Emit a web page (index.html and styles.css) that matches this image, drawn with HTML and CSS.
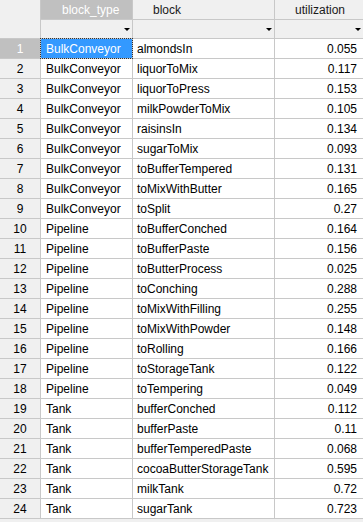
FILE: index.html
```html
<!DOCTYPE html>
<html>
<head>
<meta charset="utf-8">
<link rel="stylesheet" href="styles.css">
</head>
<body>
<div class="grid">
  <div class="corner"></div>
  <div class="hdr hdr-sel">block_type</div>
  <div class="hdr">block</div>
  <div class="hdr">utilization</div>
  <div class="flt"><span class="arrow"></span></div>
  <div class="flt"><span class="arrow"></span></div>
  <div class="flt"><span class="arrow"></span></div>

  <div class="rn rn-sel">1</div><div class="c t c-sel">BulkConveyor</div><div class="c">almondsIn</div><div class="c num">0.055</div>
  <div class="rn">2</div><div class="c t">BulkConveyor</div><div class="c">liquorToMix</div><div class="c num">0.117</div>
  <div class="rn">3</div><div class="c t">BulkConveyor</div><div class="c">liquorToPress</div><div class="c num">0.153</div>
  <div class="rn">4</div><div class="c t">BulkConveyor</div><div class="c">milkPowderToMix</div><div class="c num">0.105</div>
  <div class="rn">5</div><div class="c t">BulkConveyor</div><div class="c">raisinsIn</div><div class="c num">0.134</div>
  <div class="rn">6</div><div class="c t">BulkConveyor</div><div class="c">sugarToMix</div><div class="c num">0.093</div>
  <div class="rn">7</div><div class="c t">BulkConveyor</div><div class="c">toBufferTempered</div><div class="c num">0.131</div>
  <div class="rn">8</div><div class="c t">BulkConveyor</div><div class="c">toMixWithButter</div><div class="c num">0.165</div>
  <div class="rn">9</div><div class="c t">BulkConveyor</div><div class="c">toSplit</div><div class="c num">0.27</div>
  <div class="rn">10</div><div class="c t">Pipeline</div><div class="c">toBufferConched</div><div class="c num">0.164</div>
  <div class="rn">11</div><div class="c t">Pipeline</div><div class="c">toBufferPaste</div><div class="c num">0.156</div>
  <div class="rn">12</div><div class="c t">Pipeline</div><div class="c">toButterProcess</div><div class="c num">0.025</div>
  <div class="rn">13</div><div class="c t">Pipeline</div><div class="c">toConching</div><div class="c num">0.288</div>
  <div class="rn">14</div><div class="c t">Pipeline</div><div class="c">toMixWithFilling</div><div class="c num">0.255</div>
  <div class="rn">15</div><div class="c t">Pipeline</div><div class="c">toMixWithPowder</div><div class="c num">0.148</div>
  <div class="rn">16</div><div class="c t">Pipeline</div><div class="c">toRolling</div><div class="c num">0.166</div>
  <div class="rn">17</div><div class="c t">Pipeline</div><div class="c">toStorageTank</div><div class="c num">0.122</div>
  <div class="rn">18</div><div class="c t">Pipeline</div><div class="c">toTempering</div><div class="c num">0.049</div>
  <div class="rn">19</div><div class="c t">Tank</div><div class="c">bufferConched</div><div class="c num">0.112</div>
  <div class="rn">20</div><div class="c t">Tank</div><div class="c">bufferPaste</div><div class="c num">0.11</div>
  <div class="rn">21</div><div class="c t">Tank</div><div class="c">bufferTemperedPaste</div><div class="c num">0.068</div>
  <div class="rn">22</div><div class="c t">Tank</div><div class="c">cocoaButterStorageTank</div><div class="c num">0.595</div>
  <div class="rn">23</div><div class="c t">Tank</div><div class="c">milkTank</div><div class="c num">0.72</div>
  <div class="rn">24</div><div class="c t">Tank</div><div class="c">sugarTank</div><div class="c num">0.723</div>
</div>
</body>
</html>
```
FILE: styles.css
```css
html, body {
  margin: 0;
  padding: 0;
  background: #f0f0f0;
}
body {
  font-family: "Liberation Sans", Arial, sans-serif;
  font-size: 12px;
  color: #000;
}
.grid {
  display: grid;
  grid-template-columns: 40px 91px 141px 88px;
  grid-template-rows: 19px 18px repeat(24, 19px);
  gap: 1px;
  background: #c8c8c8;
  width: 363px;
  border-bottom: 1px solid #c8c8c8;
  border-right: 1px solid #c8c8c8;
  box-sizing: border-box;
}
.corner {
  grid-row: span 2;
  background: #f0f0f0;
}
.hdr {
  background: #f0f0f0;
  display: flex;
  align-items: center;
  padding-left: 20px;
  color: #1a1a1a;
}
.hdr-sel {
  background: #c0c0c0;
  color: #fff;
  padding-left: 21px;
}
.flt {
  background: #f0f0f0;
  display: flex;
  align-items: center;
  justify-content: flex-end;
  padding-right: 2px;
}
.arrow {
  width: 0;
  height: 0;
  border-left: 3px solid transparent;
  border-right: 3px solid transparent;
  border-top: 3px solid #000;
  margin-top: 1px;
}
.rn {
  background: #f0f0f0;
  display: flex;
  align-items: center;
  justify-content: center;
}
.rn-sel {
  background: #c0c0c0;
  color: #fff;
}
.c {
  background: #fff;
  display: flex;
  align-items: center;
  padding-left: 4px;
  white-space: nowrap;
  overflow: hidden;
}
.t {
  padding-left: 5px;
}
.c-sel {
  background: #3399ff;
  color: #fff;
  outline: 1px dotted #333;
}
.num {
  justify-content: flex-end;
  padding-left: 0;
  padding-right: 6px;
}
```
